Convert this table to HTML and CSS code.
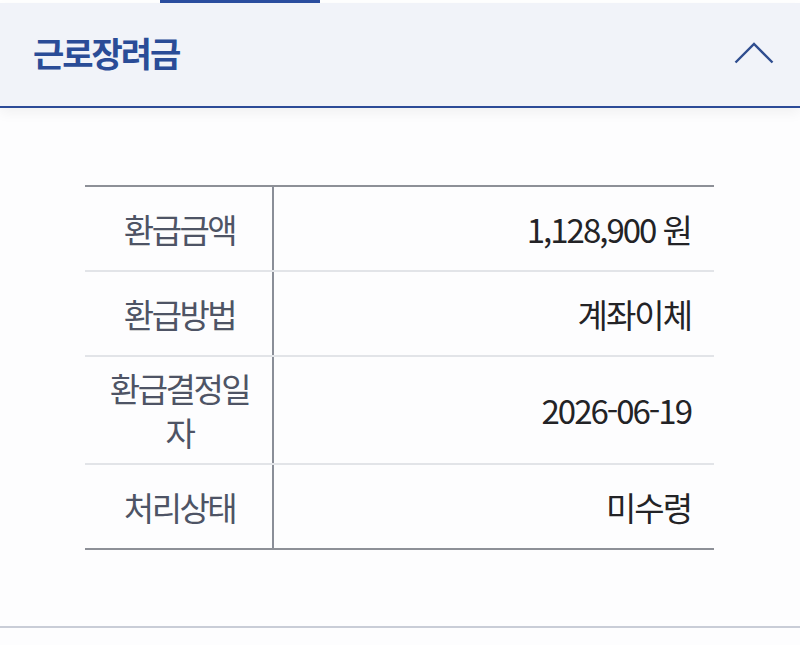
FILE: index.html
```html
<!DOCTYPE html>
<html lang="ko">
<head>
<meta charset="utf-8">
<link rel="stylesheet" href="styles.css">
</head>
<body>
<div class="tabbar"><div class="tab-active"></div></div>
<div class="acc-header">
  <h2 class="acc-title">근로장려금</h2>
  <svg class="chevron" width="40" height="22" viewBox="0 0 40 22"><polyline points="1.5,20.5 20,2 38.5,20.5" fill="none" stroke="#2f4d8f" stroke-width="2.4"/></svg>
</div>
<div class="acc-body">
  <div class="info-table">
    <div class="row"><div class="label">환급금액</div><div class="value">1,128,900 원</div></div>
    <div class="row"><div class="label">환급방법</div><div class="value">계좌이체</div></div>
    <div class="row"><div class="label">환급결정일자</div><div class="value">2026-06-19</div></div>
    <div class="row"><div class="label">처리상태</div><div class="value">미수령</div></div>
  </div>
</div>
</body>
</html>
```
FILE: styles.css
```css
html, body {
  margin: 0;
  padding: 0;
  background: #fdfdfe;
  font-family: "Noto Sans CJK KR", "Noto Sans", sans-serif;
}
.tabbar {
  height: 3px;
  background: #ffffff;
}
.tab-active {
  margin-left: 160px;
  width: 160px;
  height: 3px;
  background: #2b4ea0;
}
.acc-header {
  background: #f1f3f9;
  border-bottom: 2px solid #2c4b98;
  display: flex;
  align-items: center;
  justify-content: space-between;
  padding: 0 26px 4px 33px;
  box-sizing: border-box;
  height: 105px;
  box-shadow: 0 5px 12px rgba(0, 0, 0, 0.05);
  position: relative;
}
.acc-title {
  margin: 0;
  font-size: 34px;
  font-weight: 700;
  color: #2a4c97;
  letter-spacing: -2px;
  line-height: 1;
}
.chevron {
  display: block;
}
.acc-body {
  padding: 77px 86px 76px 85px;
  border-bottom: 2px solid #c9cdd7;
}
.info-table {
  border-top: 2px solid #8d9097;
  border-bottom: 2px solid #8d9097;
}
.row {
  display: flex;
  min-height: 83px;
  border-bottom: 2px solid #e2e4e8;
}
.row:last-child {
  border-bottom: none;
}
.label {
  width: 187px;
  flex: none;
  display: flex;
  align-items: center;
  justify-content: center;
  text-align: center;
  padding: 9px 16px 9px 18px;
  box-sizing: border-box;
  font-size: 33px;
  line-height: 44px;
  letter-spacing: -2.5px;
  word-break: break-all;
  color: #4e5465;
}
.value {
  flex: 1;
  border-left: 2px solid #8a8e98;
  display: flex;
  align-items: center;
  justify-content: flex-end;
  padding-right: 23px;
  font-size: 33px;
  color: #232326;
  letter-spacing: -2px;
}
```
